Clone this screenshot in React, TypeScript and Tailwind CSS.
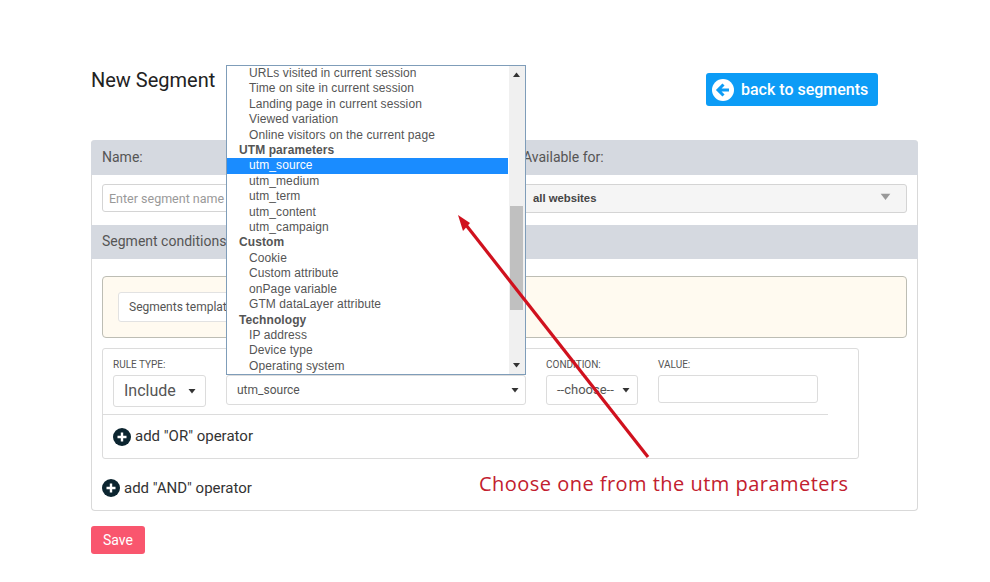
const options: [string, boolean?, boolean?][] = [
  ["URLs visited in current session"],
  ["Time on site in current session"],
  ["Landing page in current session"],
  ["Viewed variation"],
  ["Online visitors on the current page"],
  ["UTM parameters", true],
  ["utm_source", false, true],
  ["utm_medium"],
  ["utm_term"],
  ["utm_content"],
  ["utm_campaign"],
  ["Custom", true],
  ["Cookie"],
  ["Custom attribute"],
  ["onPage variable"],
  ["GTM dataLayer attribute"],
  ["Technology", true],
  ["IP address"],
  ["Device type"],
  ["Operating system"],
];

function Caret({ className }: { className: string }) {
  return (
    <svg viewBox="0 0 8 6" className={className}>
      <path d="M0.5 1h7L4 5.5z" fill="currentColor" />
    </svg>
  );
}

function PlusCircle() {
  return (
    <svg viewBox="0 0 18 18" className="w-[18px] h-[18px] shrink-0">
      <circle cx="9" cy="9" r="9" fill="#0c2530" />
      <path d="M9 4.5v9M4.5 9h9" stroke="#fff" strokeWidth="2.4" />
    </svg>
  );
}

function Label({ children }: { children?: string }) {
  return <div className="h-[14px] mb-[3px] text-[10px] leading-[14px] text-[#555] uppercase">{children}</div>;
}

export default function App() {
  return (
    <div className="relative w-[990px] h-[582px] overflow-hidden bg-white font-['Roboto',sans-serif]">
      <div className="w-[827px] ml-[91px]">
        <div className="flex h-[140px] pt-[68px] items-start justify-between">
          <h1 className="text-[20px] leading-[24px] text-[#222]">New Segment</h1>
          <a className="mt-[5px] mr-[40px] flex items-center w-[172px] h-[33px] rounded-[3px] bg-[#0c9cf6] pl-[6px] text-white text-[16px] font-medium">
            <svg viewBox="0 0 22 22" className="w-[22px] h-[22px] mr-[7px]">
              <circle cx="11" cy="11" r="11" fill="#fff" />
              <path d="M11.5 5.5L6 11l5.5 5.5M6.5 11H17" fill="none" stroke="#0c9cf6" strokeWidth="3" />
            </svg>
            back to segments
          </a>
        </div>

        <section className="h-[371px] rounded-[4px] border border-[#d9d9d9] border-t-0">
          <div className="grid grid-cols-[421px_1fr] h-[35px] -mx-px rounded-t-[4px] bg-[#d5d9e0] text-[14px] leading-[35px] text-[#555]">
            <div className="pl-[11px]">Name:</div>
            <div className="pl-[11px]">Available for:</div>
          </div>
          <div className="grid grid-cols-[421px_1fr] h-[50px] pt-[9px]">
            <div className="pl-[10px]">
              <div className="w-[400px] h-[28px] rounded-[3px] border border-[#d4d4d4] pl-[6px] text-[12.5px] leading-[28px] text-[#999]">
                Enter segment name
              </div>
            </div>
            <div className="pr-[10px]">
              <div className="flex items-center justify-between h-[29px] rounded-[3px] border border-[#d4d4d4] bg-[#f5f5f5] pl-[19px] pr-[15px] text-[11.3px] font-bold text-[#444] font-['Liberation_Sans',sans-serif]">
                all websites
                <Caret className="w-[11px] h-[9px] -mt-[5px] text-[#999]" />
              </div>
            </div>
          </div>
          <div className="h-[34px] -mx-px bg-[#d5d9e0] pl-[11px] text-[14px] leading-[33px] text-[#555]">Segment conditions</div>

          <div className="px-[10px] pt-[17px]">
            <div className="h-[62px] rounded-[4px] border border-[#bdbdb4] bg-[#fffaf0] pl-[15px] pt-[15px]">
              <div className="w-[200px] h-[30px] rounded-[3px] border border-[#e2e2e2] bg-white pl-[10px] text-[12px] leading-[28px] text-[#555]">
                Segments template
              </div>
            </div>

            <div className="mt-[10px] w-[757px] h-[111px] rounded-[3px] border border-[#dcdcdc]">
              <div className="w-[725px] h-[66px] border-b border-[#dcdcdc] flex items-start pl-[10px] pt-[9px]">
                <div className="w-[93px]">
                  <Label>Rule type:</Label>
                  <div className="flex items-center justify-between h-[32px] rounded-[3px] border border-[#dcdcdc] pl-[10px] pr-[9px] text-[16px] text-[#555]">
                    Include
                    <Caret className="w-[8px] h-[6px] text-[#333]" />
                  </div>
                </div>
                <div className="w-[300px] ml-[20px]">
                  <Label />
                  <div className="flex items-center justify-between h-[30px] rounded-[3px] border border-[#dcdcdc] pl-[10px] pr-[6px] text-[12px] text-[#555]">
                    utm_source
                    <Caret className="w-[8px] h-[6px] text-[#333]" />
                  </div>
                </div>
                <div className="w-[92px] ml-[20px]">
                  <Label>Condition:</Label>
                  <div className="flex items-center justify-between h-[30px] rounded-[3px] border border-[#dcdcdc] pl-[10px] pr-[7px] text-[13px] text-[#555]">
                    --choose--
                    <Caret className="w-[8px] h-[6px] text-[#333]" />
                  </div>
                </div>
                <div className="w-[160px] ml-[20px]">
                  <Label>Value:</Label>
                  <div className="h-[28px] rounded-[3px] border border-[#dcdcdc]" />
                </div>
              </div>
              <div className="flex items-center gap-[4px] h-[43px] pl-[10px] text-[15px] text-[#333]">
                <PlusCircle />
                add "OR" operator
              </div>
            </div>

            <div className="flex items-center gap-[4px] mt-[20px] h-[18px] text-[15px] text-[#333]">
              <PlusCircle />
              add "AND" operator
            </div>
          </div>
        </section>

        <button className="mt-[15px] w-[54px] h-[28px] rounded-[3px] bg-[#f9566e] text-white text-[14px]">Save</button>
      </div>

      {/* open dropdown list */}
      <div className="absolute left-[226px] top-[65px] w-[300px] h-[310px] flex overflow-hidden border border-[#7f9db9] bg-white font-['Liberation_Sans',sans-serif] text-[12px] tracking-[0.09px] text-[#555]">
        <ul className="flex-1">
          {options.map(([label, group, active]) => (
            <li
              key={label}
              className={
                "h-[15.42px] leading-[15.42px] whitespace-nowrap " +
                (group ? "pl-[12px] font-bold " : "pl-[22px] ") +
                (active ? "bg-[#1a8cff] text-white" : "")
              }
            >
              {label}
            </li>
          ))}
        </ul>
        <div className="relative w-[16px] ml-px bg-[#f0f0f0]">
          <Caret className="absolute left-[3px] top-[6px] w-[9px] h-[6px] rotate-180 text-[#333]" />
          <div className="absolute left-[1px] w-[13px] top-[140px] h-[104px] bg-[#c0c0c0]" />
          <Caret className="absolute left-[3px] bottom-[6px] w-[9px] h-[6px] text-[#333]" />
        </div>
      </div>

      {/* annotation */}
      <svg viewBox="0 0 990 582" className="absolute inset-0 w-[990px] h-[582px] pointer-events-none">
        <path d="M648 457L466 225" stroke="#d0111e" strokeWidth="3.2" fill="none" />
        <path d="M458 215L470 223L463 231z" fill="#d0111e" />
      </svg>
      <div className="absolute left-[479px] top-[470px] text-[20px] tracking-[0.47px] leading-[28px] text-[#c2202e] whitespace-nowrap font-['Open_Sans',sans-serif]">
        Choose one from the utm parameters
      </div>
    </div>
  );
}
